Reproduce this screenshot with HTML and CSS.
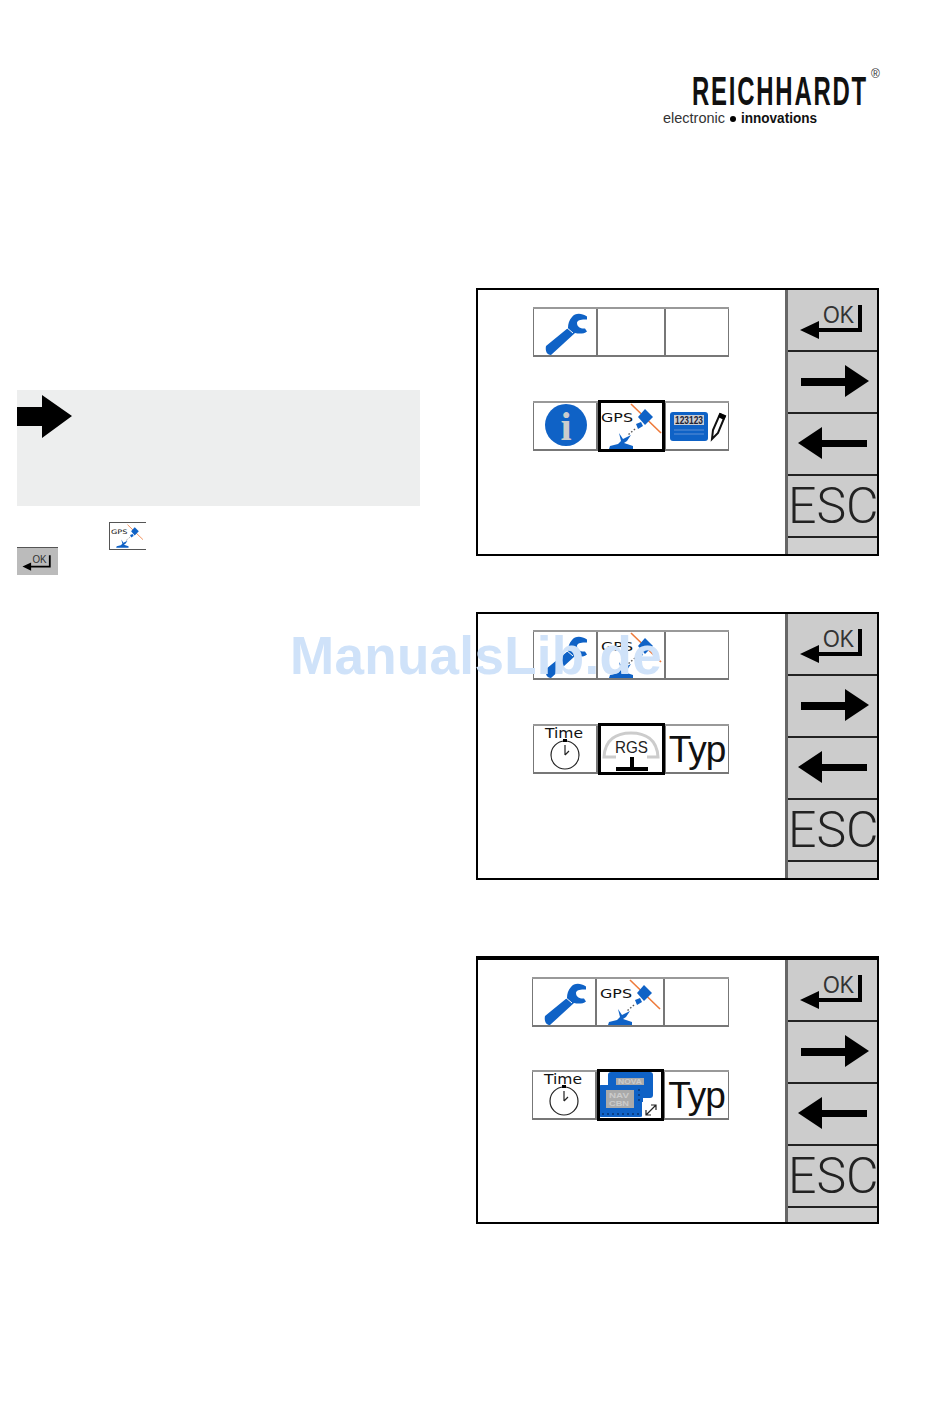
FILE: index.html
```html
<!DOCTYPE html>
<html lang="en">
<head>
    <meta charset="UTF-8">
    <title>Reichhardt - Terminal menu</title>
    <link rel="stylesheet" href="styles.css">
</head>
<body>
    <!-- Shared icon shapes, the labels are written where the icon is used -->
    <svg class="defs" width="0" height="0">
        <symbol id="wrench" viewBox="0 0 64 50">
            <path class="blue" d="M54 9.5 C48 5.5 42 6 39 10 C36 13 35 17 35 21 L13 39 C12 44 14 48 18 48 L42 26 C46 27 51 27 54 24.5 L52 21.5 C48 22 44 20 44 16 C44 13 49 12 54 12.5 Z"/>
            <path class="white-line" d="M33 20 L40 26" stroke-width="1"/>
        </symbol>
        <symbol id="info" viewBox="0 0 64 50">
            <circle class="blue" cx="33" cy="24" r="21"/>
        </symbol>
        <symbol id="gps" viewBox="0 0 68 50">
            <path class="orange-line" d="M34 3 L64 32" stroke-width="1.6"/>
            <path class="blue" d="M48 8 L56 16 L48 24 L41 16 Z"/>
            <path class="blue" d="M39 23 L44 21 L46 25 L41 28 Z"/>
            <path class="dots" d="M38 28 L31 34"/>
            <path class="blue" d="M22 32 L26 38 L34 34 L30 40 L27 42 L36 45 L36 48 L12 48 L13 45 L21 43 L24 40 Z"/>
        </symbol>
        <symbol id="meter" viewBox="0 0 64 50">
            <rect class="blue" x="5" y="11" width="38" height="29" rx="3"/>
            <rect class="screen" x="9" y="14" width="30" height="10"/>
            <path class="dim-line" d="M9 29 H39 M9 33 H39" stroke-width="1"/>
            <path class="pencil" d="M55 13 L60 15 L53 32 L47 38 L48 29 Z"/>
            <path class="solid" d="M55 12 L61 15 L59 19 L53 16 Z"/>
        </symbol>
        <symbol id="clock" viewBox="0 0 64 50">
            <circle class="thin" cx="32" cy="31" r="14"/>
            <path class="thin" d="M32 31 V21 M32 31 L36 27"/>
            <rect class="solid" x="30" y="15" width="4" height="3"/>
        </symbol>
        <symbol id="rgs" viewBox="0 0 68 50">
            <path class="dome" d="M19 33 H7 C8 15 20 9 34 9 C48 9 60 15 61 33 H50"/>
            <path class="solid" d="M33 33 H37 V43 H51 V47 H19 V43 H33 Z"/>
        </symbol>
        <symbol id="chips" viewBox="0 0 68 50">
            <rect class="blue" x="12" y="2" width="45" height="26" rx="3"/>
            <rect class="chip-grey" x="20" y="8" width="28" height="7"/>
            <rect class="blue" x="2" y="15" width="45" height="32" rx="3"/>
            <rect class="chip-grey" x="10" y="20" width="28" height="18"/>
            <path class="pins" d="M6 44 H44 M43 19 V32"/>
            <rect class="white" x="46" y="32" width="18" height="16"/>
            <path class="thin" d="M50 45 L60 35 M55 35 H60 V40 M50 40 V45 H55"/>
        </symbol>
        <symbol id="ok" viewBox="0 0 90 60">
            <path class="solid" d="M12 40 L31 31 V38 H70 V15 H74 V42 H31 V49 Z"/>
        </symbol>
        <symbol id="right" viewBox="0 0 90 60">
            <path class="solid" d="M13 26 H57 V13 L81 29 L57 45 V34 H13 Z"/>
        </symbol>
        <symbol id="left" viewBox="0 0 90 60">
            <path class="solid" d="M79 26 H34 V13 L10 29 L34 45 V33 H79 Z"/>
        </symbol>
    </svg>

    <div class="page">
        <header class="top">
            <svg class="logo" width="218" height="60" viewBox="0 0 218 60">
                <text class="logo-name" x="29" y="37" textLength="176" lengthAdjust="spacingAndGlyphs">REICHHARDT</text>
                <text class="logo-reg" x="208" y="10">&reg;</text>
                <text class="logo-sub" x="0" y="55" textLength="62" lengthAdjust="spacingAndGlyphs">electronic</text>
                <circle class="solid" cx="70" cy="51" r="3"/>
                <text class="logo-sub bold" x="78" y="55" textLength="76" lengthAdjust="spacingAndGlyphs">innovations</text>
            </svg>
        </header>

        <main class="content">
            <section class="left">
                <div class="note">
                    <svg class="note-arrow" width="55" height="43" viewBox="0 0 55 43">
                        <path class="solid" d="M0 12 H25 V0 L55 21 L25 43 V31 H0 Z"/>
                    </svg>
                </div>
                <div class="step-gps">
                    <svg width="35" height="26" viewBox="0 0 68 50"><use href="#gps"/><text class="gps-text" x="2" y="21" textLength="32" lengthAdjust="spacingAndGlyphs">GPS</text></svg>
                </div>
                <div class="step-ok">
                    <svg width="41" height="28" viewBox="0 0 90 60"><use href="#ok"/><text class="ok-text" x="34" y="33" textLength="31" lengthAdjust="spacingAndGlyphs">OK</text></svg>
                </div>
            </section>

            <section class="right">
                <div class="screen-box first">
                    <div class="display">
                        <div class="icon-row">
                            <div class="cell narrow"><svg width="64" height="50" viewBox="0 0 64 50"><use href="#wrench"/></svg></div>
                            <div class="cell wide"></div>
                            <div class="cell narrow"></div>
                        </div>
                        <div class="icon-row">
                            <div class="cell narrow"><svg width="64" height="50" viewBox="0 0 64 50"><use href="#info"/><text class="info-i" x="33" y="39" text-anchor="middle">i</text></svg></div>
                            <div class="cell wide selected"><svg width="68" height="50" viewBox="0 0 68 50"><use href="#gps"/><text class="gps-text" x="4" y="21" textLength="32" lengthAdjust="spacingAndGlyphs">GPS</text></svg></div>
                            <div class="cell narrow"><svg width="64" height="50" viewBox="0 0 64 50"><use href="#meter"/><text class="meter-text" x="10" y="23" textLength="28" lengthAdjust="spacingAndGlyphs">123123</text></svg></div>
                        </div>
                    </div>
                    <div class="side">
                        <div class="side-btn"><svg width="90" height="60" viewBox="0 0 90 60"><use href="#ok"/><text class="ok-text" x="35" y="33" textLength="31" lengthAdjust="spacingAndGlyphs">OK</text></svg></div>
                        <div class="side-btn"><svg width="90" height="60" viewBox="0 0 90 60"><use href="#right"/></svg></div>
                        <div class="side-btn"><svg width="90" height="60" viewBox="0 0 90 60"><use href="#left"/></svg></div>
                        <div class="side-btn esc">ESC</div>
                        <div class="side-rest"></div>
                    </div>
                </div>

                <div class="screen-box second">
                    <div class="display">
                        <div class="icon-row">
                            <div class="cell narrow"><svg width="64" height="50" viewBox="0 0 64 50"><use href="#wrench"/></svg></div>
                            <div class="cell wide"><svg width="68" height="50" viewBox="0 0 68 50"><use href="#gps"/><text class="gps-text" x="4" y="21" textLength="32" lengthAdjust="spacingAndGlyphs">GPS</text></svg></div>
                            <div class="cell narrow"></div>
                        </div>
                        <div class="icon-row">
                            <div class="cell narrow"><svg width="64" height="50" viewBox="0 0 64 50"><use href="#clock"/><text class="time-text" x="12" y="14" textLength="38" lengthAdjust="spacingAndGlyphs">Time</text></svg></div>
                            <div class="cell wide selected"><svg width="68" height="50" viewBox="0 0 68 50"><use href="#rgs"/><text class="rgs-text" x="18" y="29" textLength="33" lengthAdjust="spacingAndGlyphs">RGS</text></svg></div>
                            <div class="cell narrow typ">Typ</div>
                        </div>
                    </div>
                    <div class="side">
                        <div class="side-btn"><svg width="90" height="60" viewBox="0 0 90 60"><use href="#ok"/><text class="ok-text" x="35" y="33" textLength="31" lengthAdjust="spacingAndGlyphs">OK</text></svg></div>
                        <div class="side-btn"><svg width="90" height="60" viewBox="0 0 90 60"><use href="#right"/></svg></div>
                        <div class="side-btn"><svg width="90" height="60" viewBox="0 0 90 60"><use href="#left"/></svg></div>
                        <div class="side-btn esc">ESC</div>
                        <div class="side-rest"></div>
                    </div>
                </div>

                <div class="screen-box third">
                    <div class="display">
                        <div class="icon-row">
                            <div class="cell narrow"><svg width="64" height="50" viewBox="0 0 64 50"><use href="#wrench"/></svg></div>
                            <div class="cell wide"><svg width="68" height="50" viewBox="0 0 68 50"><use href="#gps"/><text class="gps-text" x="4" y="21" textLength="32" lengthAdjust="spacingAndGlyphs">GPS</text></svg></div>
                            <div class="cell narrow"></div>
                        </div>
                        <div class="icon-row">
                            <div class="cell narrow"><svg width="64" height="50" viewBox="0 0 64 50"><use href="#clock"/><text class="time-text" x="12" y="14" textLength="38" lengthAdjust="spacingAndGlyphs">Time</text></svg></div>
                            <div class="cell wide selected"><svg width="68" height="50" viewBox="0 0 68 50"><use href="#chips"/><text class="chip-text" x="22" y="14" textLength="24" lengthAdjust="spacingAndGlyphs">NOVA</text><text class="chip-text" x="13" y="28" textLength="20" lengthAdjust="spacingAndGlyphs">NAV</text><text class="chip-text" x="13" y="36" textLength="20" lengthAdjust="spacingAndGlyphs">CBN</text></svg></div>
                            <div class="cell narrow typ">Typ</div>
                        </div>
                    </div>
                    <div class="side">
                        <div class="side-btn"><svg width="90" height="60" viewBox="0 0 90 60"><use href="#ok"/><text class="ok-text" x="35" y="33" textLength="31" lengthAdjust="spacingAndGlyphs">OK</text></svg></div>
                        <div class="side-btn"><svg width="90" height="60" viewBox="0 0 90 60"><use href="#right"/></svg></div>
                        <div class="side-btn"><svg width="90" height="60" viewBox="0 0 90 60"><use href="#left"/></svg></div>
                        <div class="side-btn esc">ESC</div>
                        <div class="side-rest"></div>
                    </div>
                </div>
            </section>
        </main>

        <div class="watermark">ManualsLib.de</div>
    </div>
</body>
</html>
```

FILE: styles.css
```css
/* General Styles */
* {
    margin: 0;
    padding: 0;
    box-sizing: border-box;
}

body {
    font-family: 'Liberation Sans', Arial, sans-serif;
    background: #fff;
    color: #000;
}

svg {
    display: block;
}

.defs {
    position: absolute;
}

.page {
    position: relative;
    width: 950px;
    height: 1419px;
    overflow: hidden;
}

/* Logo */
.top {
    height: 288px;
    padding: 68px 0 0 663px;
}

.logo-name {
    font-size: 40px;
    font-weight: 700;
    letter-spacing: 3px;
    fill: #111;
}

.logo-reg {
    font-size: 12px;
    fill: #333;
}

.logo-sub {
    font-size: 14px;
    fill: #333;
}

.logo-sub.bold {
    font-weight: 700;
    fill: #111;
}

/* Columns */
.content {
    display: flex;
}

.left {
    width: 476px;
    padding: 102px 0 0 17px;
}

.right {
    width: 403px;
}

/* Left column */
.note {
    width: 403px;
    height: 116px;
    padding-top: 5px;
    background: #edeeee;
}

.step-gps {
    width: 37px;
    height: 28px;
    margin: 16px 0 0 92px;
    border-top: 1px solid #555;
    border-left: 1px solid #555;
    border-bottom: 1px solid #555;
}

.step-ok {
    width: 41px;
    height: 28px;
    margin-top: -3px;
    background: #bbb;
    border-top: 1px solid #555;
    overflow: hidden;
}

/* Terminal screens */
.screen-box {
    display: flex;
    height: 268px;
    border: 2px solid #000;
}

.second {
    margin-top: 56px;
}

.third {
    margin-top: 76px;
    border-top-width: 4px;
}

.display {
    flex: none;
    width: 307px;
    padding: 17px 0 0 55px;
    display: flex;
    flex-direction: column;
    gap: 44px;
}

.second .display {
    padding-top: 16px;
}

.third .display {
    padding: 17px 0 0 54px;
    gap: 43px;
}

.icon-row {
    display: flex;
    height: 50px;
}

.cell {
    height: 50px;
    box-shadow: inset 0 2px 0 #999, inset 0 -2px 0 #777, inset 1px 0 0 #777, inset -1px 0 0 #777;
}

.narrow {
    width: 64px;
}

.wide {
    width: 68px;
}

.third .narrow:last-child {
    width: 65px;
}

.selected {
    position: relative;
}

.selected::after {
    content: "";
    position: absolute;
    top: -1px;
    bottom: -1px;
    left: 1px;
    right: 0;
    border: 3px solid #000;
}

.typ {
    font-size: 37px;
    line-height: 52px;
    letter-spacing: -1px;
    text-align: center;
    color: #111;
    overflow: hidden;
}

/* Side buttons */
.side {
    flex: 1;
    min-width: 0;
    display: flex;
    flex-direction: column;
    border-left: 3px solid #666;
    background: #ccc;
    overflow: hidden;
}

.side-btn {
    height: 62px;
    border-bottom: 2px solid #222;
    overflow: hidden;
}

.esc {
    font-family: Roboto, 'Liberation Sans', sans-serif;
    font-size: 50px;
    font-weight: 300;
    line-height: 60px;
    color: #222;
    white-space: nowrap;
}

.side-rest {
    flex: 1;
    background: #d0d0d0;
}

/* Icon parts */
.blue {
    fill: #0f62c6;
}

.white {
    fill: #fff;
}

.white-line {
    stroke: #fff;
}

.orange-line {
    stroke: #ee7a3a;
}

.dots {
    fill: none;
    stroke: #555;
    stroke-width: 1.5;
    stroke-dasharray: 1.5 2;
}

.pins {
    fill: none;
    stroke: #0a3f86;
    stroke-width: 2;
    stroke-dasharray: 2 3;
}

.solid {
    fill: #000;
}

.thin {
    fill: none;
    stroke: #222;
    stroke-width: 1.2;
}

.dome {
    fill: none;
    stroke: #ccc;
    stroke-width: 3;
}

.screen {
    fill: #c9ccd2;
}

.dim-line {
    stroke: #5d8fd6;
}

.pencil {
    fill: #fff;
    stroke: #111;
    stroke-width: 2;
}

.chip-grey {
    fill: #aaa;
}

.info-i {
    font-family: 'Liberation Serif', serif;
    font-size: 40px;
    font-weight: 700;
    fill: #ccc;
}

.gps-text {
    font-family: 'DejaVu Sans', sans-serif;
    font-size: 12px;
    fill: #111;
}

.meter-text {
    font-size: 10px;
    font-weight: 700;
    fill: #223;
}

.time-text {
    font-family: 'DejaVu Sans', sans-serif;
    font-size: 14px;
    fill: #111;
}

.rgs-text {
    font-size: 17px;
    fill: #222;
}

.chip-text {
    font-size: 8px;
    font-weight: 700;
    fill: #ccc;
}

.ok-text {
    font-size: 24px;
    fill: #333;
}

/* Site stamp over the page */
.watermark {
    position: absolute;
    left: 290px;
    top: 625px;
    font-size: 53px;
    line-height: 62px;
    letter-spacing: 0.3px;
    font-weight: 700;
    color: #cfe2f9;
    white-space: nowrap;
}
```
